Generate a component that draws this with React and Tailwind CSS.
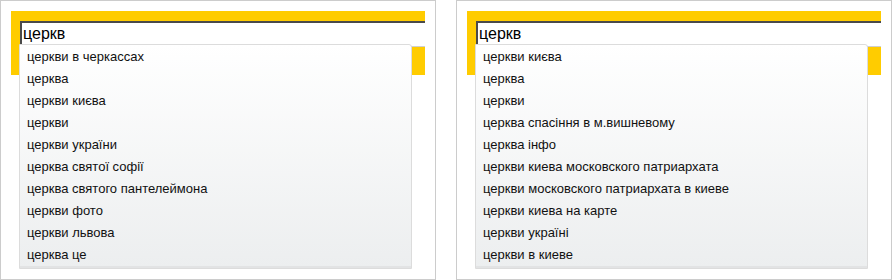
import React from 'react';

const panels = [
  {
    query: 'церкв',
    items: [
      'церкви в черкассах',
      'церква',
      'церкви києва',
      'церкви',
      'церкви україни',
      'церква святої софії',
      'церква святого пантелеймона',
      'церкви фото',
      'церкви львова',
      'церква це',
    ],
  },
  {
    query: 'церкв',
    items: [
      'церкви києва',
      'церква',
      'церкви',
      'церква спасіння в м.вишневому',
      'церква інфо',
      'церкви киева московского патриархата',
      'церкви московского патриархата в киеве',
      'церкви киева на карте',
      'церкви україні',
      'церкви в киеве',
    ],
  },
];

const SuggestPanel = ({ query, items }) => (
  <div className="w-[436px] h-[280px] border border-[#cccccc] bg-white p-[10px]">
    <div className="relative w-[414px] h-[64px] bg-[#ffcc00] pt-[10px] pl-[9px]">
      <div className="h-[26px] bg-white border-t-2 border-l-2 border-t-[#4a4a4a] border-l-[#4a4a4a] border-b border-b-[#cfcfcf] pl-[1px] text-[16px] leading-[22px] text-black">
        {query}
      </div>
      <div className="absolute left-[8px] top-[33px] w-[393px] h-[225px] border border-[#dcdcdc] rounded-tr-[3px] bg-gradient-to-b from-white to-[#eceeef] flex flex-col pt-[1px]">
        {items.map((item) => (
          <div key={item} className="h-[22px] shrink-0 flex items-center pl-[7px] text-[13px] text-[#111]">
            {item}
          </div>
        ))}
        <div className="mt-auto h-[3px] bg-[#e2e3e4]" />
      </div>
    </div>
  </div>
);

export default function App() {
  return (
    <div className="flex gap-5 bg-white" style={{ fontFamily: '"Liberation Sans", Arial, sans-serif' }}>
      {panels.map((p, i) => (
        <SuggestPanel key={i} {...p} />
      ))}
    </div>
  );
}
